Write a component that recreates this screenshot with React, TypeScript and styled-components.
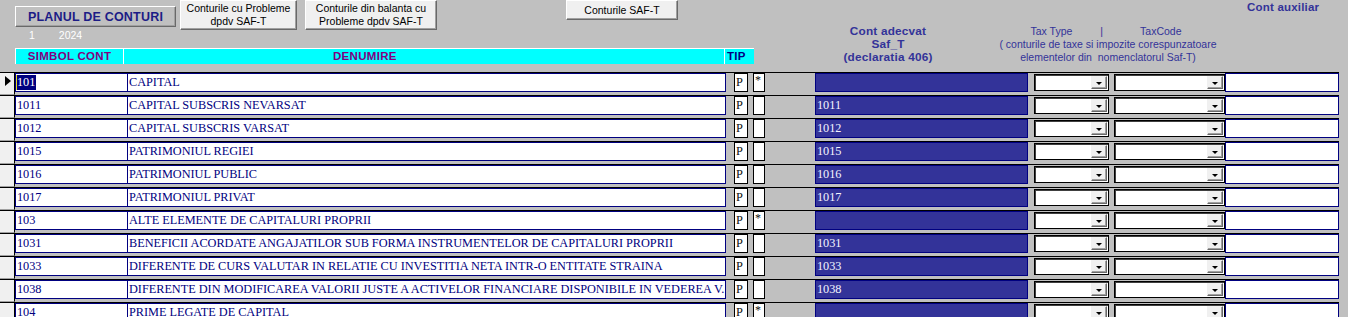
import styled, { createGlobalStyle } from "styled-components";

interface Account {
  code: string;
  name: string;
  star?: boolean;
  saft: string;
}

const accounts: Account[] = [
  { code: "101", name: "CAPITAL", star: true, saft: "" },
  { code: "1011", name: "CAPITAL SUBSCRIS NEVARSAT", saft: "1011" },
  { code: "1012", name: "CAPITAL SUBSCRIS VARSAT", saft: "1012" },
  { code: "1015", name: "PATRIMONIUL REGIEI", saft: "1015" },
  { code: "1016", name: "PATRIMONIUL PUBLIC", saft: "1016" },
  { code: "1017", name: "PATRIMONIUL PRIVAT", saft: "1017" },
  { code: "103", name: "ALTE ELEMENTE DE CAPITALURI PROPRII", star: true, saft: "" },
  {
    code: "1031",
    name: "BENEFICII ACORDATE ANGAJATILOR SUB FORMA INSTRUMENTELOR DE CAPITALURI PROPRII",
    saft: "1031",
  },
  {
    code: "1033",
    name: "DIFERENTE DE CURS VALUTAR IN RELATIE CU INVESTITIA NETA INTR-O ENTITATE STRAINA",
    saft: "1033",
  },
  {
    code: "1038",
    name: "DIFERENTE DIN MODIFICAREA VALORII JUSTE A ACTIVELOR FINANCIARE DISPONIBILE IN VEDEREA V.",
    saft: "1038",
  },
  { code: "104", name: "PRIME LEGATE DE CAPITAL", star: true, saft: "" },
];

export default function App() {
  return (
    <Page>
      <GlobalStyle />
      <Header>
        <LeftHead>
          <TopBar>
            <PlanBlock>
              <PlanButton>PLANUL DE CONTURI</PlanButton>
              <YearLine>
                <span>1</span>
                <span>2024</span>
              </YearLine>
            </PlanBlock>
            <ToolButton $w={117} $h={30} $ml={4}>
              Conturile cu Probleme
              <br />
              dpdv SAF-T
            </ToolButton>
            <ToolButton $w={132} $h={30} $ml={8}>
              Conturile din balanta cu
              <br />
              Probleme dpdv SAF-T
            </ToolButton>
            <ToolButton $w={112} $h={20} $ml={129}>
              Conturile SAF-T
            </ToolButton>
          </TopBar>
          <HeadBar>
            <HeadCell $w={108} $align="center">
              SIMBOL CONT
            </HeadCell>
            <HeadCell $w={601} $pl={209}>
              DENUMIRE
            </HeadCell>
            <HeadCell $w={30} $pl={2} $navy>
              TIP
            </HeadCell>
          </HeadBar>
        </LeftHead>
        <RightHead>
          <SaftLabel>
            Cont adecvat
            <br />
            Saf_T
            <br />
            (declaratia 406)
          </SaftLabel>
          <TaxLabel>
            <TaxLine>
              <span>Tax Type</span>
              <span>|</span>
              <span>TaxCode</span>
            </TaxLine>
            ( conturile de taxe si impozite corespunzatoare
            <br />
            elementelor din&nbsp; nomenclatorul Saf-T)
          </TaxLabel>
          <AuxLabel>Cont auxiliar</AuxLabel>
        </RightHead>
      </Header>

      {accounts.map((a, i) => (
        <Row key={a.code}>
          <Selector>{i === 0 && <Pointer />}</Selector>
          <CodeCell>
            {i === 0 ? <Selected>{a.code}</Selected> : a.code}
          </CodeCell>
          <NameCell>{a.name}</NameCell>
          <FlagBox $w={14} $ml={8}>
            P
          </FlagBox>
          <FlagBox $w={12} $ml={5} $small>
            {a.star ? "*" : ""}
          </FlagBox>
          <SaftCell>{a.saft}</SaftCell>
          <Combo $w={75} $ml={6}>
            <ComboField />
            <DropButton>
              <DropArrow />
            </DropButton>
          </Combo>
          <Combo $w={111} $ml={5}>
            <ComboField />
            <DropButton>
              <DropArrow />
            </DropButton>
          </Combo>
          <AuxBox />
        </Row>
      ))}
    </Page>
  );
}

const GlobalStyle = createGlobalStyle`
  html, body {
    margin: 0;
    padding: 0;
    background: #c0c0c0;
    overflow: hidden;
  }
  body {
    font-family: "Liberation Sans", Arial, sans-serif;
  }
`;

const Page = styled.div`
  width: 1348px;
  height: 317px;
  background: #c0c0c0;
  overflow: hidden;
`;

const Header = styled.div`
  display: flex;
  height: 72px;
`;

const LeftHead = styled.div`
  width: 754px;
  display: flex;
  flex-direction: column;
  flex: none;
`;

const TopBar = styled.div`
  display: flex;
  align-items: flex-start;
  height: 48px;
  padding-left: 15px;
`;

const PlanBlock = styled.div`
  width: 161px;
  margin-top: 6px;
  display: flex;
  flex-direction: column;
`;

const PlanButton = styled.div`
  height: 21px;
  box-sizing: border-box;
  background: #c0c0c0;
  border: 1px solid;
  border-color: #ffffff #696969 #696969 #ffffff;
  box-shadow: inset -1px -1px 0 #a0a0a0;
  display: flex;
  align-items: center;
  justify-content: center;
  font-weight: bold;
  font-size: 12.5px;
  color: #1c1c86;
  letter-spacing: 0.2px;
`;

const YearLine = styled.div`
  display: flex;
  gap: 24px;
  padding-left: 14px;
  margin-top: 2px;
  font-size: 10.5px;
  line-height: 13px;
  color: #ffffff;
`;

const ToolButton = styled.div<{ $w: number; $h: number; $ml: number }>`
  width: ${(p) => p.$w}px;
  height: ${(p) => p.$h}px;
  margin-left: ${(p) => p.$ml}px;
  box-sizing: border-box;
  background: #f0f0f0;
  border: 1px solid;
  border-color: #ffffff #696969 #696969 #ffffff;
  box-shadow: inset -1px -1px 0 #a0a0a0;
  display: flex;
  align-items: center;
  justify-content: center;
  text-align: center;
  font-size: 10.5px;
  line-height: 13px;
  color: #000000;
  flex: none;
`;

const HeadBar = styled.div`
  display: flex;
  height: 16px;
  margin-left: 15px;
`;

const HeadCell = styled.div<{ $w: number; $pl?: number; $align?: string; $navy?: boolean }>`
  width: ${(p) => p.$w}px;
  box-sizing: border-box;
  background: #00ffff;
  border-top: 1px solid #ffffff;
  border-left: 1px solid #ffffff;
  padding-left: ${(p) => p.$pl ?? 0}px;
  text-align: ${(p) => p.$align ?? "left"};
  font-weight: bold;
  font-size: 11.5px;
  letter-spacing: 0.3px;
  line-height: 15px;
  color: ${(p) => (p.$navy ? "#000080" : "#800080")};
  white-space: nowrap;
`;

const RightHead = styled.div`
  display: flex;
  align-items: flex-start;
  padding-left: 61px;
  color: #333399;
`;

const SaftLabel = styled.div`
  width: 146px;
  margin-top: 25px;
  text-align: center;
  font-weight: bold;
  font-size: 11.8px;
  line-height: 13px;
  letter-spacing: 0.2px;
`;

const TaxLabel = styled.div`
  width: 220px;
  margin-left: 37px;
  margin-top: 25px;
  text-align: center;
  font-size: 10.5px;
  line-height: 13px;
  white-space: nowrap;
`;

const TaxLine = styled.div`
  display: flex;
  justify-content: center;
  gap: 28px;
  padding-right: 4px;
  & > span:last-child {
    margin-left: 9px;
  }
`;

const AuxLabel = styled.div`
  margin-left: 29px;
  margin-top: 1px;
  font-weight: bold;
  font-size: 11.5px;
  line-height: 13px;
  letter-spacing: 0.2px;
`;

const Row = styled.div`
  display: flex;
  align-items: flex-start;
  width: 1339px;
  height: 23px;
  box-sizing: border-box;
  border-top: 1px solid #000000;
  font-family: "Liberation Serif", "Times New Roman", serif;
  font-size: 12.3px;
  letter-spacing: -0.03px;
`;

const Selector = styled.div`
  width: 15px;
  height: 22px;
  flex: none;
  box-sizing: border-box;
  background: #f0f0f0;
  border-right: 1px solid #000000;
  border-bottom: 1px solid #a0a0a0;
  display: flex;
  justify-content: center;
  padding-top: 3px;
  padding-left: 1px;
`;

const Pointer = styled.div`
  width: 0;
  height: 0;
  border-left: 6px solid #000000;
  border-top: 5px solid transparent;
  border-bottom: 5px solid transparent;
`;

const TextCell = styled.div`
  height: 19px;
  box-sizing: border-box;
  background: #ffffff;
  border: 1px solid #000080;
  padding-left: 1px;
  line-height: 17px;
  color: #000080;
  white-space: nowrap;
  overflow: hidden;
  flex: none;
`;

const CodeCell = styled(TextCell)`
  width: 113px;
`;

const NameCell = styled(TextCell)`
  width: 598px;
  border-left: none;
`;

const Selected = styled.span`
  display: inline-block;
  background: #000080;
  color: #ffffff;
  border-left: 1px solid #e8e020;
  line-height: 15px;
  padding-right: 1px;
  margin-left: -1px;
`;

const FlagBox = styled.div<{ $w: number; $ml: number; $small?: boolean }>`
  width: ${(p) => p.$w}px;
  margin-left: ${(p) => p.$ml}px;
  height: 19px;
  box-sizing: border-box;
  flex: none;
  background: #ffffff;
  border: 1px solid #000000;
  padding-left: 1px;
  color: #101010;
  font-size: ${(p) => (p.$small ? 12 : 12.4)}px;
  line-height: ${(p) => (p.$small ? 12 : 17)}px;
`;

const SaftCell = styled.div`
  width: 213px;
  margin-left: 50px;
  height: 19px;
  box-sizing: border-box;
  flex: none;
  background: #333399;
  border: 1px solid #000080;
  padding-left: 1px;
  line-height: 17px;
  color: #f4f4ff;
`;

const Combo = styled.div<{ $w: number; $ml: number }>`
  width: ${(p) => p.$w}px;
  margin-left: ${(p) => p.$ml}px;
  margin-top: 1px;
  height: 17px;
  box-sizing: border-box;
  flex: none;
  display: flex;
  background: #ffffff;
  border: 1px solid #000000;
  box-shadow: inset 1px 1px 0 #404040;
  padding: 1px 1px 1px 2px;
`;

const ComboField = styled.div`
  flex: 1;
`;

const DropButton = styled.div`
  width: 16px;
  height: 13px;
  box-sizing: border-box;
  background: #f0f0f0;
  border: 1px solid;
  border-color: #f0f0f0 #696969 #696969 #f0f0f0;
  box-shadow: inset -1px -1px 0 #a0a0a0;
  display: flex;
  align-items: center;
  justify-content: center;
  padding-top: 1px;
`;

const DropArrow = styled.div`
  width: 0;
  height: 0;
  border-left: 3px solid transparent;
  border-right: 3px solid transparent;
  border-top: 3px solid #000000;
`;

const AuxBox = styled.div`
  width: 114px;
  margin-left: 0;
  height: 19px;
  box-sizing: border-box;
  flex: none;
  background: #ffffff;
  border: 1px solid #000080;
`;
